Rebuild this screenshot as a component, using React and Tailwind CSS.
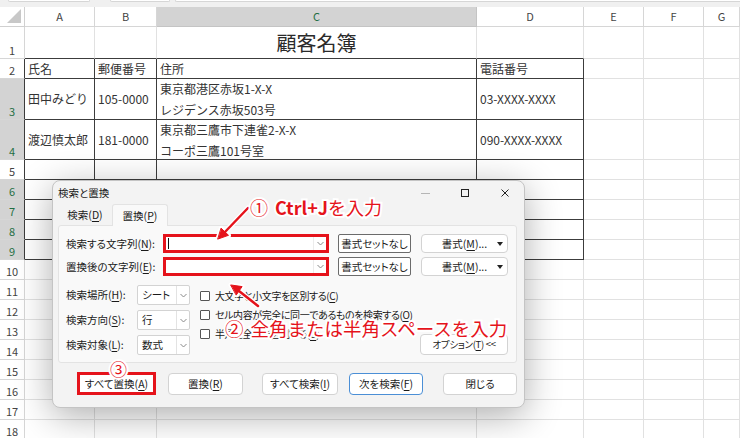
import React from 'react'

const COL_LABELS = ['A', 'B', 'C', 'D', 'E', 'F', 'G']
const SEL_ROWS = [3, 4, 6, 7, 8, 9]

const CONTENT = {
  '2-0': '氏名', '2-1': '郵便番号', '2-2': '住所', '2-3': '電話番号',
  '3-0': '田中みどり', '3-1': '105-0000', '3-2': ['東京都港区赤坂1-X-X', 'レジデンス赤坂503号'], '3-3': '03-XXXX-XXXX',
  '4-0': '渡辺慎太郎', '4-1': '181-0000', '4-2': ['東京都三鷹市下連雀2-X-X', 'コーポ三鷹101号室'], '4-3': '090-XXXX-XXXX',
}

function Acc({ children }) {
  return <span className="underline underline-offset-[2px]">{children}</span>
}

function Chevron() {
  return (
    <svg width="7" height="5" viewBox="0 0 7 5"><polyline points="0.5,1 3.5,4 6.5,1" fill="none" stroke="#8a8a8a" strokeWidth="1" /></svg>
  )
}

function Sheet() {
  const rows = Array.from({ length: 18 }, (_, i) => i + 1)
  return (
    <div className="grid grid-cols-[25px_70px_62px_320px_107px_60px_60px_1fr] grid-rows-[20px_32px_20px_41px_40px_repeat(14,20px)]">
      <div className="relative border-r border-b border-[#d0d0d0] bg-white">
        <svg className="absolute right-[3px] bottom-[3px]" width="14" height="14"><polygon points="14,0 14,14 0,14" fill="#c8c8c8" /></svg>
      </div>
      {COL_LABELS.map(c => (
        <div key={c} className={c === 'C' ? 'flex items-center justify-center text-[11px] bg-[#d3d3d3] text-[#1f6f43] border-r border-b border-[#c4c4c4]' : 'flex items-center justify-center text-[11px] bg-white text-[#444] border-r border-b border-[#d6d6d6]'}>{c}</div>
      ))}
      {rows.map(r => {
        const sel = SEL_ROWS.includes(r)
        const tableRow = r >= 2 && r <= 9
        return (
          <React.Fragment key={r}>
            <div className={(sel ? 'bg-[#d3d3d3] text-[#1f6f43] ' : 'bg-white text-[#444] ') + (tableRow ? 'border-r border-b border-b-[#d6d6d6] border-r-[#3c3c3c] ' : 'border-r border-b border-[#d6d6d6] ') + 'flex items-end justify-center pb-[2px] text-[11px] leading-none'}>{r}</div>
            {COL_LABELS.map((c, ci) => {
              const inTable = tableRow && ci <= 3
              const topEdge = r === 1 && ci <= 3
              const border = inTable ? 'border-r border-b border-[#3c3c3c]' : topEdge ? 'border-r border-b border-r-[#e1e1e1] border-b-[#3c3c3c]' : 'border-r border-b border-[#e1e1e1]'
              const v = CONTENT[`${r}-${ci}`]
              if (r === 1 && ci === 2) {
                return <div key={c} className={border + ' flex items-center justify-center text-[20px] text-[#2a2a2a]'}>顧客名簿</div>
              }
              if (Array.isArray(v)) {
                return (
                  <div key={c} className={border + ' flex flex-col justify-center px-[3px] text-[12px] leading-[21px] whitespace-nowrap'}>
                    <span>{v[0]}</span>
                    <span>{v[1]}</span>
                  </div>
                )
              }
              return <div key={c} className={border + ' flex items-center px-[3px] text-[12px] whitespace-nowrap overflow-hidden'}>{v}</div>
            })}
          </React.Fragment>
        )
      })}
    </div>
  )
}

function ComboInput({ caret }) {
  return (
    <div className="w-[166px] h-[19px] border-[3px] border-[#e5131b] bg-white flex items-center">
      {caret ? <span className="ml-[2px] w-px h-[11px] bg-[#111]" /> : null}
      <span className="ml-auto h-full w-[13px] border-l border-[#ececec] flex items-center justify-center"><Chevron /></span>
    </div>
  )
}

function FmtButtons() {
  return (
    <>
      <div className="ml-[9px] w-[73px] h-[19px] border border-[#6b6b6b] rounded-[2px] bg-white flex items-center justify-center">書式セットなし</div>
      <div className="ml-[10px] w-[87px] h-[19px] border border-[#d3d3d3] rounded-[4px] bg-white relative flex items-center justify-center">
        書式(<Acc>M</Acc>)...
        <svg className="absolute right-[4px] top-[7px]" width="6" height="4"><polygon points="0,0 6,0 3,4" fill="#222" /></svg>
      </div>
    </>
  )
}

function Dropdown({ value }) {
  return (
    <div className="w-[53px] h-[20px] border border-[#d3d3d3] rounded-[2px] bg-white flex items-center">
      <span className="flex-1 pl-[4px]">{value}</span>
      <span className="h-full w-[13px] border-l border-[#e3e3e3] flex items-center justify-center"><Chevron /></span>
    </div>
  )
}

function Check({ children }) {
  return (
    <div className="h-[19px] flex items-center whitespace-nowrap">
      <span className="w-[10px] h-[10px] border border-[#555] rounded-[1px] bg-white" />
      <span className="ml-[5px] text-[10px] tracking-[-0.4px]">{children}</span>
    </div>
  )
}

function Dialog() {
  return (
    <div className="absolute left-[52px] top-[180px] w-[473px] h-[228px] flex flex-col rounded-[8px] border border-[#c4c4c4] bg-[#f3f3f3] text-[10.5px] text-[#1a1a1a] [font-feature-settings:'palt'] shadow-[0_8px_36px_rgba(0,0,0,0.32)]">
      <div className="h-[23px] flex items-center pl-[5px] pt-[1px]">
        <span>検索と置換</span>
        <div className="ml-auto flex items-center">
          <span className="w-[9px] h-px bg-[#b5b5b5] mr-[31px]" />
          <span className="w-[8px] h-[8px] border border-[#222] mr-[32px]" />
          <svg className="mr-[15px]" width="8" height="8"><path d="M0.5 0.5 L7.5 7.5 M7.5 0.5 L0.5 7.5" stroke="#222" strokeWidth="1" /></svg>
        </div>
      </div>
      <div className="h-[21px] flex items-end pl-[5px]">
        <div className="w-[54px] h-[21px] flex items-center justify-center">検索(<Acc>D</Acc>)</div>
        <div className="relative z-10 -mb-px w-[56px] h-[22px] flex items-center justify-center bg-[#f9f9f9] border border-b-0 border-[#e3e3e3] rounded-t-[3px]">置換(<Acc>P</Acc>)</div>
      </div>
      <div className="ml-[5px] mr-[7px] h-[138px] bg-[#f9f9f9] border border-[#e3e3e3] rounded-[3px] pl-[7px] pr-[8px] pt-[8px] flex flex-col">
        <div className="h-[19px] flex items-center">
          <span className="w-[97px]">検索する文字列(<Acc>N</Acc>):</span>
          <ComboInput caret />
          <FmtButtons />
        </div>
        <div className="mt-[4px] h-[19px] flex items-center">
          <span className="w-[97px]">置換後の文字列(<Acc>E</Acc>):</span>
          <ComboInput />
          <FmtButtons />
        </div>
        <div className="mt-[9px] flex">
          <div className="flex flex-col gap-[5px]">
            <div className="h-[20px] flex items-center"><span className="w-[71px]">検索場所(<Acc>H</Acc>):</span><Dropdown value="シート" /></div>
            <div className="h-[20px] flex items-center"><span className="w-[71px]">検索方向(<Acc>S</Acc>):</span><Dropdown value="行" /></div>
            <div className="h-[20px] flex items-center"><span className="w-[71px]">検索対象(<Acc>L</Acc>):</span><Dropdown value="数式" /></div>
          </div>
          <div className="ml-[10px] pt-[1px] flex flex-col">
            <Check>大文字と小文字を区別する(<Acc>C</Acc>)</Check>
            <Check>セル内容が完全に同一であるものを検索する(<Acc>O</Acc>)</Check>
            <Check>半角と全角を区別する(<Acc>B</Acc>)</Check>
          </div>
          <div className="ml-auto self-end w-[88px] h-[21px] border border-[#d3d3d3] rounded-[4px] bg-white flex items-center justify-center text-[9.5px] tracking-[-0.3px] whitespace-nowrap">オプション(<Acc>T</Acc>)&nbsp;&lt;&lt;</div>
        </div>
      </div>
      <div className="mt-[9px] pl-[24px] flex items-center">
        <div className="w-[79px] h-[23px] border-[3px] border-[#e5131b] bg-white flex items-center justify-center">すべて置換(<Acc>A</Acc>)</div>
        <div className="ml-[12px] w-[75px] h-[22px] border border-[#d3d3d3] rounded-[4px] bg-white flex items-center justify-center">置換(<Acc>R</Acc>)</div>
        <div className="ml-[19px] w-[76px] h-[22px] border border-[#d3d3d3] rounded-[4px] bg-white flex items-center justify-center">すべて検索(<Acc>I</Acc>)</div>
        <div className="ml-[11px] w-[74px] h-[22px] border border-[#4b8fd6] rounded-[4px] bg-white flex items-center justify-center">次を検索(<Acc>F</Acc>)</div>
        <div className="ml-[20px] w-[74px] h-[22px] border border-[#d3d3d3] rounded-[4px] bg-white flex items-center justify-center">閉じる</div>
      </div>
    </div>
  )
}

function Arrows() {
  return (
    <svg className="absolute left-0 top-0 pointer-events-none" width="740" height="438">
      <g stroke="#fff" strokeWidth="5" strokeLinecap="round" fill="#fff" strokeLinejoin="round">
        <line x1="248" y1="208" x2="224" y2="233" />
        <polygon points="218,239 228.5,235.3 221.3,228.4" />
        <line x1="258" y1="306" x2="239" y2="291" />
        <polygon points="231,285 242.1,286.6 236.4,294.8" />
      </g>
      <g stroke="#e5131b" strokeWidth="2.5" strokeLinecap="round" fill="#e5131b">
        <line x1="248" y1="208" x2="224" y2="233" />
        <polygon points="218,239 228.5,235.3 221.3,228.4" strokeWidth="1" strokeLinejoin="round" />
        <line x1="258" y1="306" x2="239" y2="291" />
        <polygon points="231,285 242.1,286.6 236.4,294.8" strokeWidth="1" strokeLinejoin="round" />
      </g>
    </svg>
  )
}

function Notes() {
  const outline = 'text-[#e5131b] leading-none whitespace-nowrap [-webkit-text-stroke:4px_#fff] [paint-order:stroke_fill]'
  return (
    <>
      <div className={'absolute left-[250px] top-[198px] text-[18px] flex items-baseline ' + outline}>
        <span>①</span>
        <span className="ml-[7px] font-bold">Ctrl+J</span>
        <span className="font-normal">を入力</span>
      </div>
      <div className={'absolute left-[225px] top-[319px] text-[18.5px] flex items-baseline ' + outline}>
        <span>②</span>
        <span className="ml-[7px] font-normal">全角または半角スペースを入力</span>
      </div>
      <div className={'absolute left-[110px] top-[360px] text-[17px] ' + outline}>③</div>
    </>
  )
}

export default function App() {
  return (
    <div className="relative w-[740px] h-[438px] overflow-hidden bg-white font-['Noto_Sans_CJK_JP','Noto_Sans',sans-serif] text-[#333]">
      <div className="h-[7px] bg-[#f0f0f0] flex items-start">
        <span className="ml-[8px] w-[82px] h-[2px] bg-white border-b border-x border-[#d6d6d6] rounded-b-[2px]" />
        <span className="ml-[20px] w-[60px] h-[2px] bg-white border-b border-x border-[#d6d6d6] rounded-b-[2px]" />
        <span className="ml-[5px] flex-1 h-[2px] bg-white border-b border-l border-[#d6d6d6] rounded-bl-[2px]" />
      </div>
      <Sheet />
      <Dialog />
      <Arrows />
      <Notes />
    </div>
  )
}
